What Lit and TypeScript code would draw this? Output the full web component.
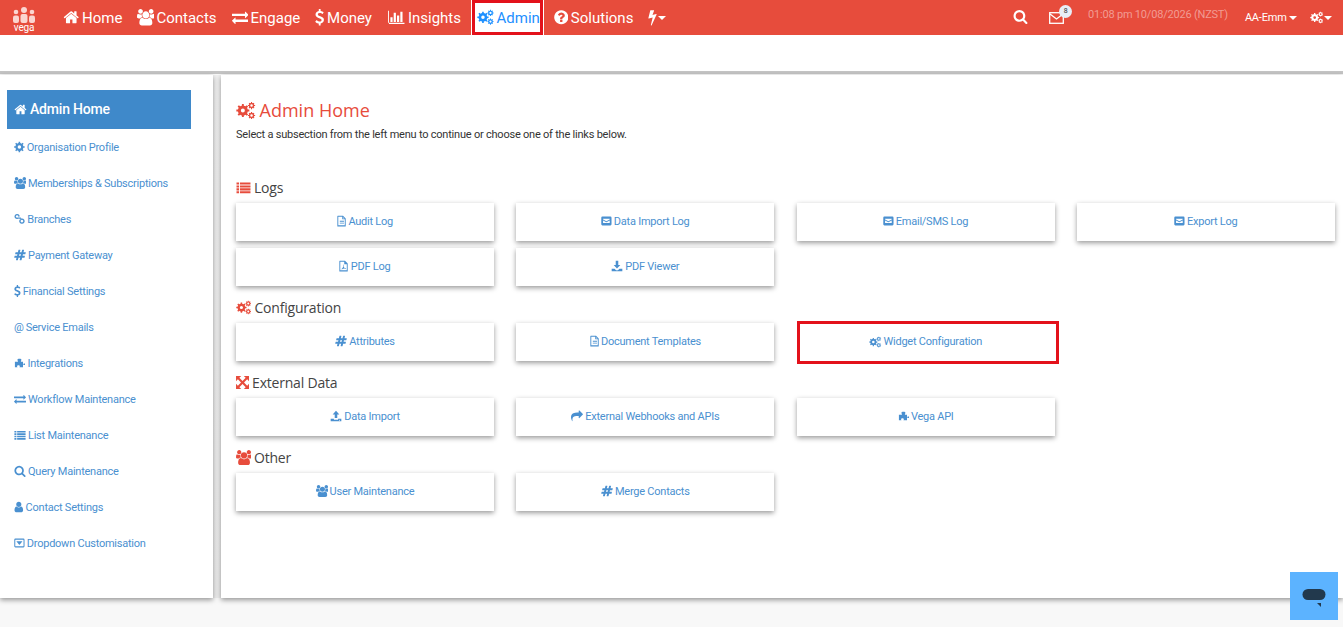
import { LitElement, css, html, svg } from "lit";
import { customElement } from "lit/decorators.js";

// builds a toothed wheel as an even-odd path, with a hole in the middle
function gear(cx: number, cy: number, r: number, teeth: number, hole: number) {
    const pts: string[] = [];
    const step = (Math.PI * 2) / teeth;
    for (let i = 0; i < teeth; i++) {
        const a = i * step;
        const inner = r * 0.76;
        [
            [a - step * 0.5, inner],
            [a - step * 0.26, inner],
            [a - step * 0.18, r],
            [a + step * 0.18, r],
            [a + step * 0.26, inner],
        ].forEach(([t, d]) => pts.push(`${(cx + Math.cos(t) * d).toFixed(1)} ${(cy + Math.sin(t) * d).toFixed(1)}`));
    }
    const h = `M${cx - hole} ${cy}a${hole} ${hole} 0 1 0 ${hole * 2} 0a${hole} ${hole} 0 1 0 ${-hole * 2} 0z`;
    return `M${pts.join("L")}z${h}`;
}

const FA: Record<string, string> = {
    home: "M1472 992v480q0 26-19 45t-45 19h-384v-384h-256v384h-384q-26 0-45-19t-19-45v-480q0-1 .5-3t.5-3l575-474 575 474q1 2 1 6zm223-69l-62 74q-8 9-21 11h-3q-13 0-21-7l-692-577-692 577q-12 8-24 7-13-2-21-11l-62-74q-8-10-7-23.500t11-21.500l719-599q32-26 76-26t76 26l244 204v-195q0-14 9-23t23-9h192q14 0 23 9t9 23v408l219 182q10 8 11 21.500t-7 23.500z",
    users: "M593 896q-162 5-265 128h-134q-82 0-138-40.500t-56-118.500q0-353 124-353 6 0 43.500 21t97.500 42.500 119 21.500q67 0 133-23-5 37-5 66 0 139 81 256zm1071 637q0 120-73 189.500t-194 69.500h-874q-121 0-194-69.500t-73-189.500q0-53 3.500-103.500t14-109 26.500-108.500 43-97.500 62-81 85.500-53.500 111.500-20q10 0 43 21.500t73 48 107 48 135 21.500 135-21.500 107-48 73-48 43-21.500q61 0 111.500 20t85.500 53.500 62 81 43 97.500 26.500 108.500 14 109 3.500 103.500zm-1024-1277q0 106-75 181t-181 75-181-75-75-181 75-181 181-75 181 75 75 181zm704 384q0 159-112.500 271.500t-271.500 112.500-271.500-112.500-112.500-271.500 112.500-271.500 271.500-112.500 271.500 112.500 112.500 271.500zm576 225q0 78-56 118.500t-138 40.500h-134q-103-123-265-128 81-117 81-256 0-29-5-66 66 23 133 23 59 0 119-21.500t97.500-42.500 43.500-21q124 0 124 353zm-128-609q0 106-75 181t-181 75-181-75-75-181 75-181 181-75 181 75 75 181z",
    exchange: "M1792 1184v192q0 13-9.500 22.500t-22.500 9.500h-1376v192q0 13-9.500 22.500t-22.500 9.500q-12 0-24-10l-319-320q-9-9-9-22 0-14 9-23l320-320q9-9 23-9 13 0 22.500 9.500t9.500 22.500v192h1376q13 0 22.500 9.500t9.500 22.500zm0-544q0 14-9 23l-320 320q-9 9-23 9-13 0-22.500-9.500t-9.500-22.500v-192h-1376q-13 0-22.500-9.500t-9.500-22.500v-192q0-13 9.500-22.500t22.500-9.500h1376v-192q0-14 9-23t23-9q12 0 24 10l319 319q9 9 9 23z",
    usd: "M1362 1185q0 153-99.500 263.500t-258.500 136.500v175q0 14-9 23t-23 9h-135q-13 0-22.500-9.500t-9.500-22.500v-175q-66-9-127.500-31t-101.500-44.500-74-48-46.500-37.500-17.500-18q-17-21-2-41l103-135q7-10 23-12 15-2 24 9l2 2q113 99 243 125 37 8 74 8 81 0 142.500-43t61.500-122q0-28-15-53t-33.500-42-58.500-37.500-66-32-80-32.500q-39-16-61.500-25t-61.500-26.500-62.500-31-56.500-35.500-53.500-42.500-43.500-49-35.500-58-21-66.500-8.500-78q0-138 98-242t255-134v-180q0-13 9.500-22.500t22.500-9.500h135q14 0 23 9t9 23v176q57 6 110.500 23t87 33.500 63.500 37.500 39 29 15 14q17 18 5 38l-81 146q-8 15-23 16-14 3-27-7-3-3-14.500-12t-39-26.500-58.500-32-74.500-26-85.500-11.500q-95 0-155 43t-60 111q0 26 8.500 48t29.500 41.500 39.500 33 56 31 60.500 27 70 27.500q53 20 81 31.500t76 35 75.500 42.500 62 50 53 63.500 31.500 76.500 13 94z",
    hash: "M991 1024l64-256h-254l-64 256h254zm768-504l-56 224q-7 24-31 24h-327l-64 256h311q15 0 25 12 10 14 6 28l-56 224q-5 24-31 24h-327l-81 328q-7 24-31 24h-224q-16 0-26-12-9-12-6-28l78-312h-254l-81 328q-7 24-31 24h-225q-15 0-25-12-9-12-6-28l78-312h-311q-15 0-25-12-9-12-6-28l56-224q7-24 31-24h327l64-256h-311q-15 0-25-12-10-14-6-28l56-224q5-24 31-24h327l81-328q7-24 32-24h224q15 0 25 12 9 12 6 28l-78 312h254l81-328q7-24 32-24h224q15 0 25 12 9 12 6 28l-78 312h311q15 0 25 12 9 12 6 28z",
    search: "M1216 832q0-185-131.500-316.500t-316.500-131.500-316.500 131.500-131.500 316.500 131.500 316.500 316.500 131.500 316.500-131.500 131.500-316.500zm512 832q0 52-38 90t-90 38q-54 0-90-38l-343-342q-179 124-399 124-143 0-273.500-55.500t-225-150-150-225-55.500-273.500 55.500-273.500 150-225 225-150 273.500-55.500 273.500 55.500 225 150 150 225 55.500 273.500q0 220-124 399l343 343q37 37 37 90z",
    user: "M1536 1399q0 109-62.500 187t-150.500 78h-854q-88 0-150.500-78t-62.500-187q0-85 8.500-160.500t31.500-152 58.500-131 94-89 134.500-34.500q131 128 313 128t313-128q76 0 134.500 34.500t94 89 58.500 131 31.500 152 8.500 160.500zm-256-887q0 159-112.500 271.500t-271.500 112.500-271.500-112.500-112.500-271.500 112.500-271.500 271.500-112.500 271.500 112.500 112.500 271.500z",
    question: "M1024 1376v-192q0-14-9-23t-23-9h-192q-14 0-23 9t-9 23v192q0 14 9 23t23 9h192q14 0 23-9t9-23zm256-672q0-88-55.500-163t-138.500-116-170-41q-243 0-371 213-15 24 8 42l132 100q7 6 19 6 16 0 25-12 53-68 86-92 34-24 86-24 48 0 85.500 26t37.500 59q0 38-20 61t-68 45q-63 28-115.500 86.500t-52.500 125.500v36q0 14 9 23t23 9h192q14 0 23-9t9-23q0-19 21.500-49.500t54.500-49.500q32-18 49-28.500t46-35 44.500-48 28-60.500 12.500-81zm384 192q0 209-103 385.500t-279.500 279.500-385.500 103-385.500-103-279.500-279.500-103-385.500 103-385.500 279.500-279.500 385.500-103 385.500 103 279.500 279.500 103 385.500z",
    bolt: "M1333 566q18 20 7 44l-540 1157q-13 25-42 25-4 0-14-2-17-5-25.500-19t-4.500-30l197-808-406 101q-4 1-12 1-18 0-31-11-18-15-13-39l201-825q4-14 16-23t28-9h328q19 0 32 12.500t13 29.500q0 8-5 18l-171 463 396-98q8-2 12-2 19 0 34 15z",
    share: "M1792 640q0 26-19 45l-512 512q-19 19-45 19t-45-19-19-45v-256h-224q-98 0-175.500 6t-154 21.500-133 42.500-105.500 69.500-80 101-48.500 138.500-17.500 181q0 55 5 123 0 6 2.500 23.500t2.500 26.500q0 15-8.500 25t-23.500 10q-16 0-28-17-7-9-13-22t-13.500-30-10.500-24q-127-285-127-451 0-199 53-333 162-403 875-403h224v-256q0-26 19-45t45-19 45 19l512 512q19 19 19 45z",
    list: "M60 300h300v240H60zM470 300h1260v240H470zM60 650h300v240H60zM470 650h1260v240H470zM60 1000h300v240H60zM470 1000h1260v240H470zM60 1350h300v240H60zM470 1350h1260v240H470z",
    chart: "M0 1500h1792v120H0zM0 200h100v1420H0zM260 900h240v500H260zM620 400h240v1000H620zM980 700h240v700H980zM1340 300h240v1100h-240z",
    puzzle: "M860 260c200 0 300 70 300 170 0 70-90 110-90 190 0 50 40 90 90 90h230v360c40-70 90-100 170-100h230v220h-230c-80 0-130-30-170-100v450H850c40-40 70-90 70-150 0-100-90-170-210-170s-210 70-210 170c0 60 30 110 70 150H180V710h370c50 0 90-40 90-90 0-80-90-120-90-190 0-100 110-170 310-170z",
    upload: "M896 120l500 540h-310v540H706V660H396zM100 1300h480v100q0 60 60 60h512q60 0 60-60v-100h480v380H100zM1430 1460a70 70 0 1 0 1 0z",
    download: "M706 120h380v620h310L896 1270 396 740h310zM100 1300h430l190 190q176 120 352 0l190-190h430v380H100z",
    arrows: "M120 120h620l-220 220 376 376 376-376-220-220h620v620l-220-220-376 376 376 376 220-220v620h-620l220-220-376-376-376 376 220 220H120v-620l220 220 376-376-376-376-220 220z",
    link: "M520 130a390 390 0 1 0 1 0zm0 200a190 190 0 1 1-1 0zM1240 820a400 400 0 1 0 1 0zm0 200a200 200 0 1 1-1 0zM690 640l150-150 320 340-150 150z",
    mailbox: "M300 240h1192q170 0 170 170v972q0 170-170 170H300q-170 0-170-170V410q0-170 170-170zM400 560v110l496 270 496-270V560zm0 250v370h992V810l-496 270z",
    dropbox: "M300 240h1192q170 0 170 170v972q0 170-170 170H300q-170 0-170-170V410q0-170 170-170zm20 180q-40 0-40 40v872q0 40 40 40h1152q40 0 40-40V460q0-40-40-40zM480 640h832q60 0-20 80L960 1120q-64 60-128 0L500 720q-80-80-20-80z",
    filetext: "M300 120h800l400 400v1150q0 50-50 50H300q-50 0-50-50V170q0-50 50-50zm90 140v1280h970V640h-380V260zm730 60v200h200zM620 860h620v130H620zM620 1150h620v130H620z",
    filepdf: "M300 120h800l400 400v1150q0 50-50 50H300q-50 0-50-50V170q0-50 50-50zm90 140v1280h970V640h-380V260zM620 1420q-100-40 30-150 110-90 160-260 60-200 20-330 60-30 80 60 20 120-20 280 70 150 190 210 160-20 190 50 10 60-90 60-100 0-190-70-150 30-270 80-60 90-100 70z",
};

const gearsPath = gear(620, 900, 620, 8, 190) + gear(1440, 430, 340, 8, 120) + gear(1440, 1370, 340, 8, 120);
const cogPath = gear(896, 896, 790, 8, 260);

// share of the square each glyph really takes, so narrow ones don't leave gaps
const WIDTHS: Record<string, number> = {
    usd: 0.56,
    user: 0.8,
    bolt: 0.55,
    cog: 0.9,
    filetext: 0.78,
    filepdf: 0.78,
    mailbox: 0.9,
    dropbox: 0.9,
    question: 0.88,
    link: 0.94,
    puzzle: 0.95,
    cogs: 1.03,
    chart: 1.12,
    arrows: 0.87,
};

function icon(name: string) {
    const d = name === "cogs" ? gearsPath : name === "cog" ? cogPath : FA[name];
    const k = WIDTHS[name] ?? 1;
    const box = `${(1792 - 1792 * k) / 2} 0 ${1792 * k} 1792`;
    return html`<svg class="ic" style="width:${k}em" viewBox=${box} fill="currentColor" fill-rule="evenodd" aria-hidden="true">${svg`<path d=${d}></path>`}</svg>`;
}

const caret = html`<span class="caret"></span>`;

const NAV = [
    ["home", "Home"],
    ["users", "Contacts"],
    ["exchange", "Engage"],
    ["usd", "Money"],
    ["chart", "Insights"],
    ["cogs", "Admin"],
    ["question", "Solutions"],
];

const SIDE = [
    ["cog", "Organisation Profile"],
    ["users", "Memberships & Subscriptions"],
    ["link", "Branches"],
    ["hash", "Payment Gateway"],
    ["usd", "Financial Settings"],
    ["@", "Service Emails"],
    ["puzzle", "Integrations"],
    ["exchange", "Workflow Maintenance"],
    ["list", "List Maintenance"],
    ["search", "Query Maintenance"],
    ["user", "Contact Settings"],
    ["dropbox", "Dropdown Customisation"],
];

const SECTIONS = [
    {
        icon: "list",
        title: "Logs",
        links: [
            ["filetext", "Audit Log"],
            ["mailbox", "Data Import Log"],
            ["mailbox", "Email/SMS Log"],
            ["mailbox", "Export Log"],
            ["filepdf", "PDF Log"],
            ["download", "PDF Viewer"],
        ],
    },
    {
        icon: "cogs",
        title: "Configuration",
        links: [
            ["hash", "Attributes"],
            ["filetext", "Document Templates"],
            ["cogs", "Widget Configuration"],
        ],
    },
    {
        icon: "arrows",
        title: "External Data",
        links: [
            ["upload", "Data Import"],
            ["share", "External Webhooks and APIs"],
            ["puzzle", "Vega API"],
        ],
    },
    {
        icon: "users",
        title: "Other",
        links: [
            ["users", "User Maintenance"],
            ["hash", "Merge Contacts"],
        ],
    },
];

@customElement("app-root")
export class AppRoot extends LitElement {
    static styles = css`
        :host {
            display: block;
            position: relative;
            height: 627px;
            overflow: hidden;
            background: #f8f8f8;
            font-family: Roboto, "Liberation Sans", sans-serif;
            color: #333;
            letter-spacing: -0.2px;
        }

        .ic {
            display: inline-block;
            height: 1em;
            flex: none;
            vertical-align: -0.12em;
        }

        .caret {
            display: inline-block;
            width: 0;
            height: 0;
            border-left: 4px solid transparent;
            border-right: 4px solid transparent;
            border-top: 4px solid currentColor;
        }

        .top {
            display: flex;
            align-items: center;
            height: 35px;
            background: #e74c3c;
            color: #fff;
        }

        .logo {
            width: 26px;
            height: 30px;
            margin-left: 11px;
            margin-right: 26px;
            flex: none;
        }

        .nav {
            display: flex;
            align-items: center;
            gap: 15px;
            font-size: 15px;
            letter-spacing: 0;
        }

        .nav a {
            display: flex;
            align-items: center;
            gap: 2.5px;
            height: 35px;
            white-space: nowrap;
        }

        .nav .ic {
            font-size: 16.5px;
        }

        .nav a.active {
            box-sizing: border-box;
            margin: 0 -4px 0 -4px;
            padding: 0 0 0 2px;
            background: #fff;
            border: 3px solid #e3111b;
            outline: 1px solid #fff;
            color: #1e90ff;
        }

        .nav a.bolt {
            gap: 1px;
        }

        .tools {
            display: flex;
            align-items: center;
            margin-left: auto;
            padding-right: 11px;
            font-size: 11px;
        }

        .tools .search {
            font-size: 15px;
        }

        .mail {
            position: relative;
            display: flex;
            margin-left: 21px;
        }

        .mail svg {
            width: 15px;
            height: 12px;
        }

        .badge {
            position: absolute;
            top: -7px;
            right: -8px;
            width: 13px;
            height: 13px;
            border-radius: 50%;
            background: #e8edf6;
            color: #333;
            font-size: 7px;
            line-height: 13px;
            text-align: center;
        }

        .time {
            margin-left: 24px;
            margin-top: -6px;
            font-size: 11px;
            color: rgba(255, 255, 255, 0.45);
            white-space: nowrap;
        }

        .who {
            display: flex;
            align-items: center;
            gap: 2px;
            margin-left: 17px;
            white-space: nowrap;
        }

        .cfg {
            display: flex;
            align-items: center;
            gap: 1px;
            margin-left: 13px;
        }

        .cfg .ic {
            font-size: 13px;
        }

        .strip {
            height: 36px;
            background: #fff;
            border-bottom: 3px solid #c4c4c4;
        }

        .page {
            display: flex;
            gap: 8px;
            height: 523px;
            margin-top: 1px;
            background: linear-gradient(#f0f0f0, #ececec);
        }

        .panel {
            background: #fff;
            box-shadow: 0 2px 5px rgba(0, 0, 0, 0.4);
        }

        .side {
            box-sizing: border-box;
            width: 213px;
            flex: none;
            padding: 15px 22px 0 7px;
        }

        .side-head {
            display: flex;
            align-items: center;
            gap: 3px;
            height: 38px;
            padding: 0 0 1px 7px;
            background: #3f89ca;
            color: #fff;
            font-size: 14px;
            font-weight: 500;
        }

        .side-head .ic {
            font-size: 13px;
        }

        .side a {
            display: flex;
            align-items: center;
            gap: 2px;
            height: 36px;
            padding-left: 7px;
            color: #4a90d0;
            font-size: 11px;
            letter-spacing: -0.24px;
            white-space: nowrap;
        }

        .side-list a .ic {
            font-size: 12px;
        }

        .at {
            font-size: 11px;
        }

        .main {
            flex: 1;
            padding: 24px 8px 0 15px;
            min-width: 0;
        }

        h1 {
            margin: 0;
            display: flex;
            align-items: center;
            gap: 4px;
            height: 22px;
            color: #e74c3c;
            font-family: "Open Sans", Roboto, sans-serif;
            font-size: 18px;
            font-weight: 400;
            letter-spacing: 0;
        }

        h1 .ic {
            font-size: 19px;
        }

        .lead {
            margin: 6px 0 0;
            height: 50px;
            font-size: 11px;
            line-height: 15px;
            letter-spacing: -0.22px;
        }

        h2 {
            box-sizing: border-box;
            display: flex;
            align-items: center;
            gap: 3px;
            margin: 0;
            height: 22px;
            padding-bottom: 2px;
            font-family: "Open Sans", Roboto, sans-serif;
            font-size: 14px;
            font-weight: 400;
            letter-spacing: -0.2px;
            color: #444;
        }

        h2 .ic {
            color: #e74c3c;
            font-size: 15px;
        }

        .section {
            margin-bottom: 11px;
        }

        .grid {
            display: grid;
            grid-template-columns: repeat(4, 258px);
            column-gap: 22.3px;
            row-gap: 7px;
            margin-top: 4px;
        }

        .card {
            box-sizing: border-box;
            display: flex;
            align-items: center;
            justify-content: center;
            gap: 2px;
            height: 38px;
            padding-bottom: 2px;
            background: #fff;
            color: #4a90d0;
            font-size: 11px;
            letter-spacing: -0.24px;
            box-shadow: 0 2px 5px rgba(0, 0, 0, 0.4);
            white-space: nowrap;
        }

        .card .ic {
            font-size: 12px;
        }

        .card.marked {
            width: 262px;
            height: 43px;
            margin: -2px 0 -3px;
            padding-right: 4px;
            border: 3px solid #e3111b;
            box-shadow: none;
        }

        .chat {
            position: absolute;
            left: 1290px;
            top: 572px;
            width: 48px;
            height: 48px;
            background: #5cb3ff;
        }

        .chat svg {
            display: block;
        }
    `;

    protected render() {
        return html`
            <div class="top">
                <svg class="logo" viewBox="0 0 26 30" aria-label="vega">
                    <g fill="#fbd5d0">
                        <circle cx="13" cy="7" r="3"></circle>
                        <circle cx="5" cy="9" r="2.3"></circle>
                        <circle cx="21" cy="9" r="2.3"></circle>
                        <rect x="9.500" y="11" width="7" height="9" rx="2"></rect>
                        <rect x="2" y="12.500" width="6" height="7.500" rx="2"></rect>
                        <rect x="18" y="12.500" width="6" height="7.500" rx="2"></rect>
                    </g>
                    <text x="13" y="28" text-anchor="middle" fill="#fff" font-size="10" font-family="Roboto, sans-serif">vega</text>
                </svg>
                <nav class="nav">
                    ${NAV.map(
                        ([ic, label]) => html`<a class=${label === "Admin" ? "active" : ""}>${icon(ic)}${label}</a>`
                    )}
                    <a class="bolt">${icon("bolt")}${caret}</a>
                </nav>
                <div class="tools">
                    <span class="search">${icon("search")}</span>
                    <span class="mail">
                        <svg viewBox="0 0 15 12" fill="none" stroke="#fff" stroke-width="1.300">
                            <rect x="0.700" y="0.700" width="13.600" height="10.600"></rect>
                            <path d="M1 2l6.500 5L14 2"></path>
                        </svg>
                        <span class="badge">8</span>
                    </span>
                    <span class="time">01:08 pm 10/08/2026 (NZST)</span>
                    <span class="who">AA-Emm${caret}</span>
                    <span class="cfg">${icon("cogs")}${caret}</span>
                </div>
            </div>
            <div class="strip"></div>
            <div class="page">
                <aside class="panel side">
                    <div class="side-head">${icon("home")}Admin Home</div>
                    <div class="side-list">
                        ${SIDE.map(
                            ([ic, label]) =>
                                html`<a>${ic === "@" ? html`<span class="at">@</span>` : icon(ic)}${label}</a>`
                        )}
                    </div>
                </aside>
                <main class="panel main">
                    <h1>${icon("cogs")}Admin Home</h1>
                    <p class="lead">Select a subsection from the left menu to continue or choose one of the links below.</p>
                    ${SECTIONS.map(
                        (s) => html`
                            <section class="section">
                                <h2>${icon(s.icon)}${s.title}</h2>
                                <div class="grid">
                                    ${s.links.map(
                                        ([ic, label]) =>
                                            html`<a class="card ${label === "Widget Configuration" ? "marked" : ""}">${icon(ic)}${label}</a>`
                                    )}
                                </div>
                            </section>
                        `
                    )}
                </main>
            </div>
            <div class="chat">
                <svg width="48" height="48" viewBox="0 0 48 48">
                    <rect x="12.500" y="17" width="23" height="11" rx="5.500" fill="#22394d"></rect>
                    <path d="M27 31h4v4z" fill="#22394d"></path>
                </svg>
            </div>
        `;
    }
}
